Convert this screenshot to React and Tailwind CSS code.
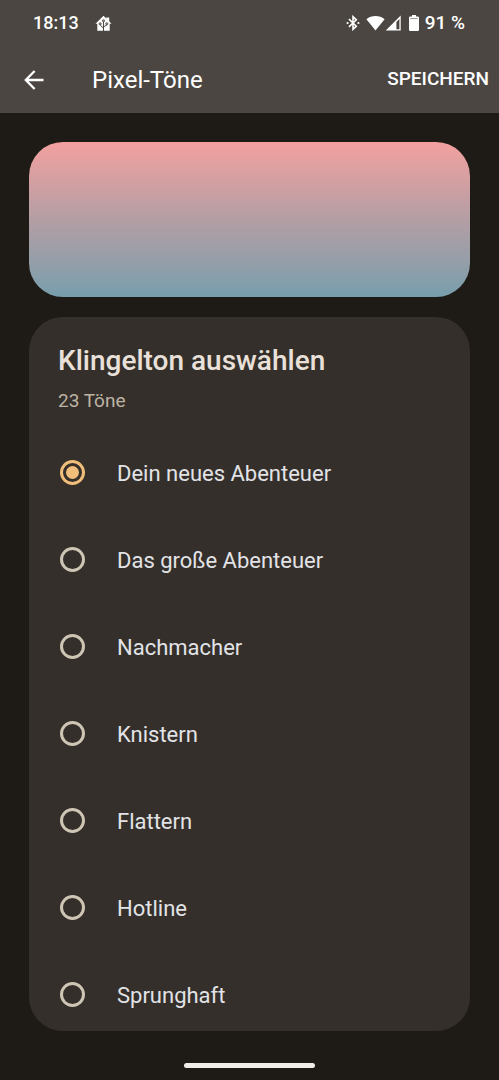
import { useState } from "react";

const ringtones = [
  "Dein neues Abenteuer",
  "Das große Abenteuer",
  "Nachmacher",
  "Knistern",
  "Flattern",
  "Hotline",
  "Sprunghaft",
];

const HomeIcon = () => (
  <svg viewBox="0 0 17 17" className="size-[17px]" aria-hidden="true">
    <path
      fill="#fff"
      d="M8.5.8 11.3 3.4V2.6h2.9v3.6l2.3 2.5h-1.8v7.1H2.3V8.7H.5z"
    />
    <path
      d="M8.5 16V6M8.5 13.2 5.4 10.4V9M8.5 11.8l3-1.6V9"
      fill="none"
      stroke="#4b4641"
      strokeWidth="1"
    />
    <g fill="#a5a29f" stroke="#4b4641" strokeWidth=".8">
      <circle cx="8.5" cy="5.8" r="1.1" />
      <circle cx="5.2" cy="8.8" r="1.1" />
      <circle cx="11.8" cy="8.8" r="1.1" />
    </g>
  </svg>
);

const BluetoothIcon = () => (
  <svg viewBox="0 0 14 16" className="h-4 w-3.5" aria-hidden="true">
    <path
      d="M3 4.2 10.3 11.2 7 14.3V1.7l3.3 3.1L3 11.8"
      fill="none"
      stroke="#fff"
      strokeWidth="1.6"
    />
    <circle cx="1.6" cy="8" r="1.1" fill="#fff" />
    <circle cx="12.4" cy="8" r="1.1" fill="#fff" />
  </svg>
);

const WifiIcon = () => (
  <svg viewBox="0 0 19 16" className="h-4 w-[19px]" aria-hidden="true">
    <path fill="#fff" d="M9.5 15.5.4 4.2C5.6-.2 13.4-.2 18.6 4.2z" />
  </svg>
);

const SignalIcon = () => (
  <svg viewBox="0 0 16 16" className="size-4" aria-hidden="true">
    <path fill="#fff" fillRule="evenodd" d="M15.7.5v15H.7zM14.4 4 11.4 7V14.2h3z" />
  </svg>
);

const BatteryIcon = () => (
  <svg viewBox="0 0 10 16" className="h-4 w-2.5" aria-hidden="true">
    <path
      fill="#fff"
      d="M3 0h4v1.6h1.8q1.2 0 1.2 1.2v12q0 1.2-1.2 1.2H1.2Q0 16 0 14.8v-12q0-1.2 1.2-1.2H3z"
    />
    <path stroke="#4b4641" strokeWidth=".6" d="M1.4 3.6h7.2" />
  </svg>
);

const BackIcon = () => (
  <svg viewBox="0 0 20 20" className="size-5" aria-hidden="true">
    <path
      d="M19.5 10H2M10.6 1 1.8 10l8.8 9"
      fill="none"
      stroke="#fff"
      strokeWidth="2.3"
    />
  </svg>
);

const StatusBar = () => (
  <div className="flex h-[46px] items-center justify-between pl-[33px] pr-[34px]">
    <div className="flex items-center gap-4">
      <span className="text-lg font-medium">18:13</span>
      <HomeIcon />
    </div>
    <div className="flex items-center">
      <BluetoothIcon />
      <span className="ml-1.5 flex items-center">
        <WifiIcon />
        <SignalIcon />
      </span>
      <span className="ml-2 flex items-center gap-1.5">
        <BatteryIcon />
        <span className="text-[19px] font-medium">91 %</span>
      </span>
    </div>
  </div>
);

const ToneRow = ({ name, checked, onSelect }) => (
  <label className="flex h-[87px] shrink-0 cursor-pointer items-center gap-8 pl-[31px] pr-6">
    <input
      type="radio"
      name="ringtone"
      checked={checked}
      onChange={onSelect}
      className="grid size-[25px] shrink-0 appearance-none place-items-center rounded-full border-3 border-[#cfc5b4] before:size-[13px] before:rounded-full checked:border-[#f0bd7a] checked:before:bg-[#f0bd7a]"
    />
    <span className="pt-0.5 text-[22px] text-[#e2e3e6]">{name}</span>
  </label>
);

const App = () => {
  const [selected, setSelected] = useState(ringtones[0]);

  return (
    <div className="flex h-screen flex-col bg-[#1e1b16] font-['Roboto',sans-serif] text-white">
      <header className="shrink-0 bg-[#4b4641]">
        <StatusBar />
        <div className="flex h-[67px] items-center pl-6 pr-2.5">
          <button type="button" aria-label="Zurück">
            <BackIcon />
          </button>
          <h1 className="ml-12 text-2xl">Pixel-Töne</h1>
          <button type="button" className="ml-auto text-[19px] font-medium">
            SPEICHERN
          </button>
        </div>
      </header>

      <main className="flex min-h-0 flex-1 flex-col gap-5 px-[29px] pt-[29px]">
        <div className="h-[155px] shrink-0 rounded-[34px] bg-linear-to-b from-[#f3a09f] via-[#b39ea4] to-[#779eac]" />
        <section className="flex min-h-0 flex-1 flex-col overflow-hidden rounded-[34px] bg-[#342f2b]">
          <div className="shrink-0 px-[29px] pt-6">
            <h2 className="text-[28px]/10 font-medium text-[#e9e1d9]">
              Klingelton auswählen
            </h2>
            <p className="mt-1 text-[19px]/8 text-[#bdb3a3]">23 Töne</p>
          </div>
          <div className="mt-3 flex min-h-0 flex-1 flex-col overflow-y-auto [scrollbar-width:none]">
            {ringtones.map((name) => (
              <ToneRow
                key={name}
                name={name}
                checked={selected === name}
                onSelect={() => setSelected(name)}
              />
            ))}
          </div>
        </section>
      </main>

      <div className="flex h-[49px] shrink-0 justify-center pt-8">
        <div className="h-[5px] w-[131px] rounded-full bg-[#efedea]" />
      </div>
    </div>
  );
};

export default App;
